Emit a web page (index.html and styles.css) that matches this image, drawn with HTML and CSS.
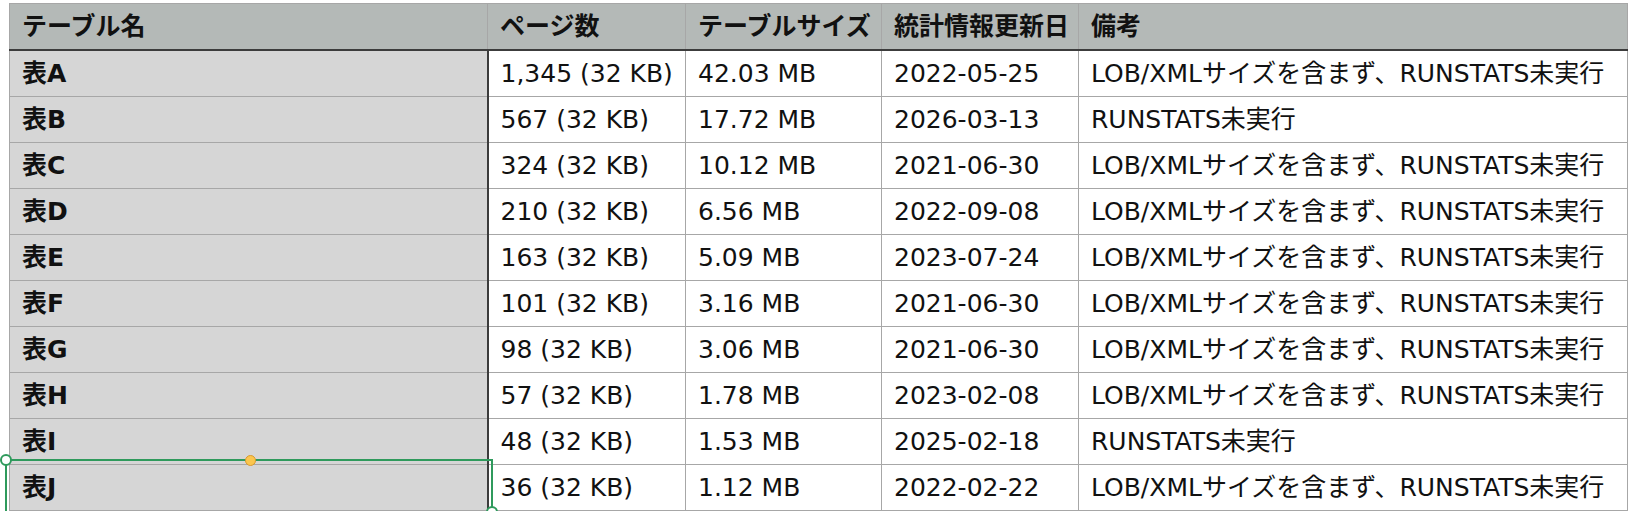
FILE: index.html
```html
<!DOCTYPE html>
<html lang="ja">
<head>
<meta charset="utf-8">
<title>テーブル一覧</title>
<link rel="stylesheet" href="styles.css">
</head>
<body>
<div class="sheet">
  <table class="grid">
    <colgroup>
      <col class="c1"><col class="c2"><col class="c3"><col class="c4"><col class="c5">
    </colgroup>
    <thead>
      <tr><th>テーブル名</th><th>ページ数</th><th>テーブルサイズ</th><th>統計情報更新日</th><th>備考</th></tr>
    </thead>
    <tbody>
      <tr><th>表A</th><td>1,345 (32 KB)</td><td>42.03 MB</td><td>2022-05-25</td><td>LOB/XMLサイズを含まず、RUNSTATS未実行</td></tr>
      <tr><th>表B</th><td>567 (32 KB)</td><td>17.72 MB</td><td>2026-03-13</td><td>RUNSTATS未実行</td></tr>
      <tr><th>表C</th><td>324 (32 KB)</td><td>10.12 MB</td><td>2021-06-30</td><td>LOB/XMLサイズを含まず、RUNSTATS未実行</td></tr>
      <tr><th>表D</th><td>210 (32 KB)</td><td>6.56 MB</td><td>2022-09-08</td><td>LOB/XMLサイズを含まず、RUNSTATS未実行</td></tr>
      <tr><th>表E</th><td>163 (32 KB)</td><td>5.09 MB</td><td>2023-07-24</td><td>LOB/XMLサイズを含まず、RUNSTATS未実行</td></tr>
      <tr><th>表F</th><td>101 (32 KB)</td><td>3.16 MB</td><td>2021-06-30</td><td>LOB/XMLサイズを含まず、RUNSTATS未実行</td></tr>
      <tr><th>表G</th><td>98 (32 KB)</td><td>3.06 MB</td><td>2021-06-30</td><td>LOB/XMLサイズを含まず、RUNSTATS未実行</td></tr>
      <tr><th>表H</th><td>57 (32 KB)</td><td>1.78 MB</td><td>2023-02-08</td><td>LOB/XMLサイズを含まず、RUNSTATS未実行</td></tr>
      <tr><th>表I</th><td>48 (32 KB)</td><td>1.53 MB</td><td>2025-02-18</td><td>RUNSTATS未実行</td></tr>
      <tr><th>表J</th><td>36 (32 KB)</td><td>1.12 MB</td><td>2022-02-22</td><td>LOB/XMLサイズを含まず、RUNSTATS未実行</td></tr>
    </tbody>
  </table>
  <div class="selection">
    <span class="handle h-tl"></span>
    <span class="handle h-mid"></span>
    <span class="handle h-br"></span>
  </div>
</div>
</body>
</html>
```

FILE: styles.css
```css
html, body {
  margin: 0;
  padding: 0;
  background: #ffffff;
}
body {
  padding: 3px 0 0 9px;
  font-family: "DejaVu Sans", "Noto Sans CJK JP", sans-serif;
  font-size: 25px;
  color: #111111;
}
.sheet {
  position: relative;
  width: 1618px;
}
.grid {
  border-collapse: collapse;
  table-layout: fixed;
  width: 1618px;
}
.c1 { width: 478px; }
.c2 { width: 198px; }
.c3 { width: 196px; }
.c4 { width: 197px; }
.c5 { width: 549px; }
.grid th, .grid td {
  border: 1px solid #a7a7a7;
  padding: 0 0 0 12px;
  text-align: left;
  vertical-align: middle;
  white-space: nowrap;
  overflow: hidden;
  height: 45px;
  line-height: 30px;
}
.grid thead th {
  background: #b4b9b7;
  font-weight: bold;
  height: 45px;
  border-bottom: 2px solid #3c3c3c;
}
.grid tbody th {
  background: #d6d6d6;
  font-weight: bold;
  border-right: 2px solid #3c3c3c;
}
.grid tbody td {
  background: #ffffff;
  font-weight: normal;
}
.selection {
  position: absolute;
  left: -4px;
  top: 456px;
  width: 488px;
  height: 54px;
  border: 2px solid #2f9a5c;
  box-sizing: border-box;
}
.handle {
  position: absolute;
  border-radius: 50%;
  box-sizing: border-box;
}
.h-tl {
  left: -7px;
  top: -7px;
  width: 12px;
  height: 12px;
  background: #ffffff;
  border: 2px solid #2f9a5c;
}
.h-br {
  right: -7px;
  bottom: -7px;
  width: 12px;
  height: 12px;
  background: #ffffff;
  border: 2px solid #2f9a5c;
}
.h-mid {
  left: 238px;
  top: -6px;
  width: 11px;
  height: 11px;
  background: #fbc64e;
  border: 1px solid #d99a2e;
}
```
